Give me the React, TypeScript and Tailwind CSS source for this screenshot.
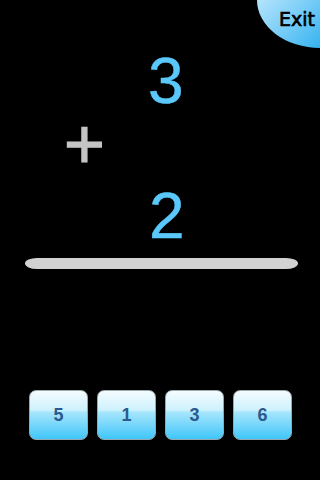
const choices = [5, 1, 3, 6]

function ExitBubble() {
  return (
    <button
      type="button"
      className="absolute right-0 top-0 flex h-[48px] w-[63px] items-start justify-end rounded-bl-[63px_48px] bg-[linear-gradient(135deg,#b4e4fb_0%,#7fcff8_45%,#34b3ef_100%)] pr-[5px] pt-[10px] text-[19px] leading-none text-black [-webkit-text-stroke:0.7px_black] [font-family:'DejaVu_Sans',sans-serif]"
    >
      Exit
    </button>
  )
}

function AnswerButton({ value }: { value: number }) {
  return (
    <button
      type="button"
      className="flex h-[50px] w-[59px] items-center justify-center rounded-[7px] border border-[#9aa6ad] bg-[linear-gradient(180deg,#f4fcff_0%,#cdf1fd_40%,#a6e6fc_44%,#6fd4fb_75%,#3ec6fa_100%)] text-[18px] font-bold text-[#2c5a8c] [font-family:'Liberation_Sans',Arial,sans-serif]"
    >
      {value}
    </button>
  )
}

export default function App() {
  return (
    <div className="relative h-[480px] w-[320px] overflow-hidden bg-black [font-family:'Liberation_Sans',Arial,sans-serif]">
      <ExitBubble />
      <div className="flex flex-col pt-[49px]">
        <div className="h-[60px] pl-[148px] text-[64px] leading-none text-[#5ac8fa] [-webkit-text-stroke:0.5px_#5ac8fa]">3</div>
        <div className="h-[75px] pl-[64px] text-[70px] leading-none text-[#c4c4c4] [-webkit-text-stroke:1.2px_#c4c4c4]">+</div>
        <div className="h-[64px] pl-[149px] text-[64px] leading-none text-[#5ac8fa] [-webkit-text-stroke:0.5px_#5ac8fa]">2</div>
        <div className="ml-[25px] mt-[10px] h-[11px] w-[273px] rounded-[12px/5.5px] bg-[#d2d2d2]" />
        <div className="mt-[121px] flex gap-[9px] pl-[29px]">
          {choices.map((n) => (
            <AnswerButton key={n} value={n} />
          ))}
        </div>
      </div>
    </div>
  )
}
